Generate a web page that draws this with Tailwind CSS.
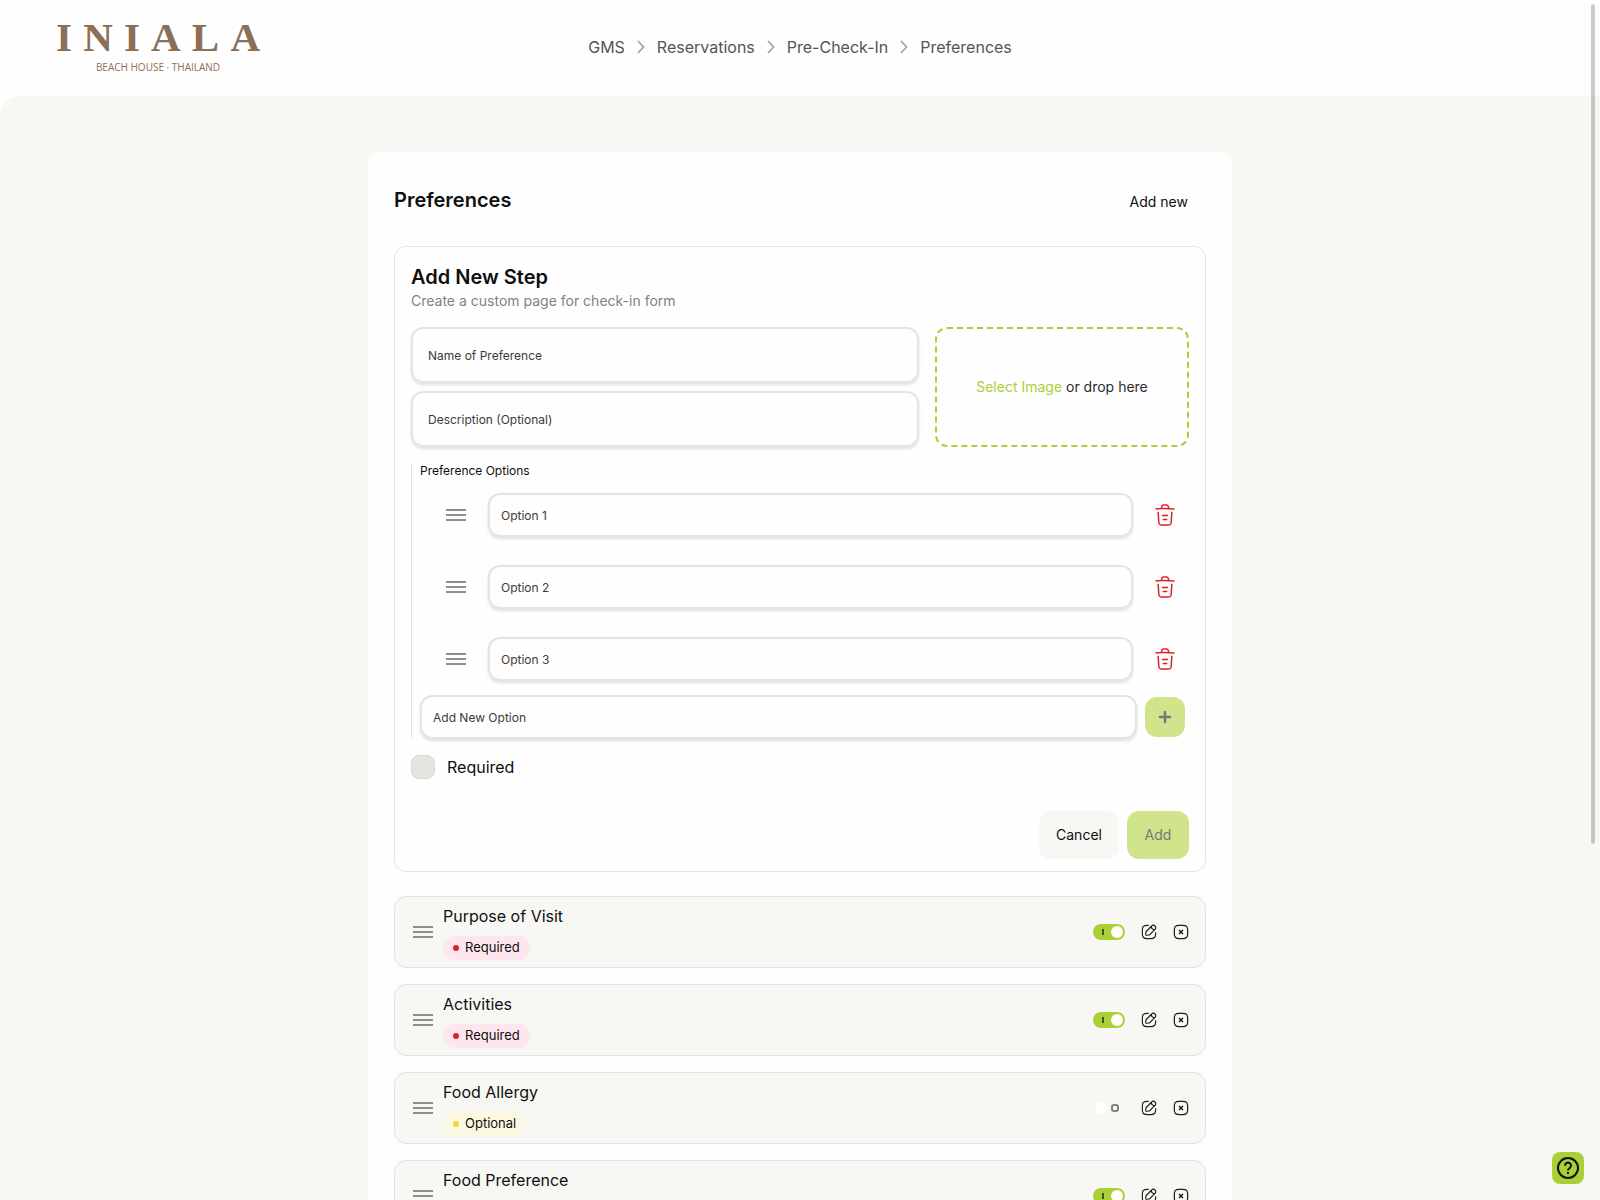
<!DOCTYPE html>
<html lang="en">
  <head>
    <meta charset="UTF-8" />
    <meta name="viewport" content="width=device-width, initial-scale=1.0" />
    <title>Preferences</title>
    <script src="https://cdn.jsdelivr.net/npm/@tailwindcss/browser@4"></script>
  </head>
  <body
    class="flex h-screen flex-col overflow-hidden bg-[#fefefe] font-['Inter',sans-serif] text-base text-[#0f0f0f]"
  >
    <!-- Shared icons -->
    <svg class="hidden">
      <symbol id="grip" viewBox="0 0 24 24">
        <path d="M2 7h20M2 12h20M2 17h20" fill="none" stroke="#8f8f8d" stroke-width="2" />
      </symbol>
      <symbol id="chevron" viewBox="0 0 16 16">
        <path d="M5 2l5.500 6L5 14" fill="none" stroke="#a3a3a3" stroke-width="1.800" />
      </symbol>
      <symbol id="trash" viewBox="0 0 24 24">
        <g fill="none" stroke="#d92429" stroke-width="1.500" stroke-linecap="round" stroke-linejoin="round">
          <path d="M21 5.980C17.670 5.650 14.320 5.480 10.980 5.480C9 5.480 7.020 5.580 5.040 5.780L3 5.980" />
          <path d="M8.500 4.970L8.720 3.660C8.880 2.710 9 2 10.690 2H13.310C15 2 15.130 2.750 15.280 3.670L15.500 4.970" />
          <path d="M18.850 9.140L18.200 19.210C18.090 20.780 18 22 15.210 22H8.790C6 22 5.910 20.780 5.800 19.210L5.150 9.140" />
          <path d="M10.330 16.500H13.660M9.500 12.500H14.500" />
        </g>
      </symbol>
      <symbol id="edit" viewBox="0 0 24 24">
        <g fill="none" stroke="#1c1c1a" stroke-width="1.700" stroke-linecap="round" stroke-linejoin="round">
          <path d="M11 2H9C4 2 2 4 2 9V15C2 20 4 22 9 22H15C20 22 22 20 22 15V13" />
          <path d="M16.040 3.020L8.160 10.900C7.860 11.200 7.560 11.790 7.500 12.220L7.070 15.230C6.910 16.320 7.680 17.080 8.770 16.930L11.780 16.500C12.200 16.440 12.790 16.140 13.100 15.840L20.980 7.960C22.340 6.600 22.980 5.020 20.980 3.020C18.980 1.020 17.400 1.660 16.040 3.020Z" />
          <path d="M14.910 4.150C15.580 6.540 17.450 8.410 19.850 9.090" />
        </g>
      </symbol>
      <symbol id="close" viewBox="0 0 24 24">
        <g fill="none" stroke="#1c1c1a" stroke-linejoin="round">
          <path d="M9 22H15C20 22 22 20 22 15V9C22 4 20 2 15 2H9C4 2 2 4 2 9V15C2 20 4 22 9 22Z" stroke-width="1.800" />
          <path d="M9 9l6 6M15 9l-6 6" stroke-width="2.200" />
        </g>
      </symbol>
    </svg>

    <!-- Header -->
    <header class="grid h-24 shrink-0 grid-cols-[1fr_auto_1fr] items-center px-14 pb-0.5">
      <a href="#" class="flex w-51 flex-col items-center text-[#8b6f56]" aria-label="Iniala Beach House">
        <span class="flex w-full justify-between font-['Liberation_Serif',serif] text-[41px] leading-8 font-bold">
          <span>I</span><span>N</span><span>I</span><span>A</span><span>L</span><span>A</span>
        </span>
        <span class="mt-2 font-['Open_Sans',sans-serif] text-[10px] leading-3">BEACH HOUSE · THAILAND</span>
      </a>
      <nav class="flex items-center gap-2 leading-6 text-[#555553]" aria-label="Breadcrumb">
        <a href="#">GMS</a>
        <svg class="size-4"><use href="#chevron" /></svg>
        <a href="#">Reservations</a>
        <svg class="size-4"><use href="#chevron" /></svg>
        <a href="#">Pre-Check-In</a>
        <svg class="size-4"><use href="#chevron" /></svg>
        <a href="#">Preferences</a>
      </nav>
    </header>

    <!-- Content -->
    <main class="min-h-0 flex-1 overflow-y-auto rounded-tl-[20px] bg-[#f7f8f3] px-4 pt-14 pb-14 [scrollbar-width:none]">
      <div class="mx-auto max-w-[864px] rounded-xl bg-[#fefefe] p-[26px]">
        <div class="mb-5 flex items-center justify-between">
          <h1 class="pb-1 text-xl font-semibold">Preferences</h1>
          <button class="h-12 rounded-xl px-[18px] text-sm">Add new</button>
        </div>

        <!-- New step form -->
        <form class="rounded-xl border border-[#e3e4de] px-4 pt-4 pb-3">
          <h2 class="text-xl font-semibold">Add New Step</h2>
          <p class="text-sm text-[#82827c]">Create a custom page for check-in form</p>

          <div class="mt-4 grid grid-cols-[2fr_1fr] gap-4">
            <div class="flex flex-col gap-2">
              <input
                type="text"
                aria-label="Name of Preference"
                placeholder="Name of Preference"
                class="h-14 w-full rounded-xl border-2 border-[#e4e5df] px-[15px] text-xs shadow-[0_2px_3px_rgba(0,0,0,0.12)] placeholder:text-[#3b3b39]"
              />
              <input
                type="text"
                aria-label="Description"
                placeholder="Description (Optional)"
                class="h-14 w-full rounded-xl border-2 border-[#e4e5df] px-[15px] text-xs shadow-[0_2px_3px_rgba(0,0,0,0.12)] placeholder:text-[#3b3b39]"
              />
            </div>
            <label class="flex items-center justify-center rounded-xl border-2 border-dashed border-[#abd037] text-sm text-[#2b2b29]">
              <input type="file" class="sr-only" />
              <span><span class="text-[#abd037]">Select Image</span> or drop here</span>
            </label>
          </div>

          <div role="group" aria-labelledby="optionsTitle" class="mt-4 border-l border-[#e3e4de] pl-2">
            <p id="optionsTitle" class="text-xs">Preference Options</p>
            <div id="optionList"></div>
            <div class="flex items-center gap-2 pr-1">
              <input
                type="text"
                aria-label="Add New Option"
                placeholder="Add New Option"
                class="h-11 min-w-0 flex-1 rounded-xl border-2 border-[#e4e5df] px-[11px] text-xs shadow-[0_2px_3px_rgba(0,0,0,0.12)] placeholder:text-[#3b3b39]"
              />
              <button type="button" aria-label="Add option" class="flex size-10 items-center justify-center rounded-xl bg-[#d0e48c]">
                <svg class="size-4" viewBox="0 0 16 16">
                  <path d="M8 3v10M3 8h10" stroke="#777876" stroke-width="2.500" stroke-linecap="round" />
                </svg>
              </button>
            </div>
          </div>

          <label class="mt-4 flex items-center gap-3">
            <input type="checkbox" class="size-6 appearance-none rounded-lg border border-[#d8d9d2] bg-[#e4e5df]" />
            Required
          </label>

          <div class="mt-8 flex justify-end gap-2">
            <button type="button" class="h-12 min-w-20 rounded-xl bg-[#f7f8f3] px-4 text-sm">Cancel</button>
            <button type="button" class="h-12 min-w-[62px] rounded-xl bg-[#d0e48c] px-4 text-sm text-[#777876]">Add</button>
          </div>
        </form>

        <!-- Saved preferences -->
        <div id="preferenceList" class="mt-6 flex flex-col gap-4"></div>
      </div>
    </main>

    <!-- Scroll thumb -->
    <div class="fixed top-1 right-[5px] h-[70vh] w-1 rounded-full bg-black/20"></div>

    <!-- Help -->
    <button aria-label="Help" class="fixed right-4 bottom-4 flex size-8 items-center justify-center rounded-lg bg-[#abd037]">
      <svg class="size-6" viewBox="0 0 24 24" fill="none" stroke="#111111" stroke-width="2">
        <circle cx="12" cy="12" r="10" />
        <path d="M9 9.700a3 3 0 1 1 4.700 2.400c-1.100.8-1.700 1.200-1.700 2.400" />
        <path d="M12 16v2" />
      </svg>
    </button>

    <script>
      const options = ["Option 1", "Option 2", "Option 3"];
      const preferences = [
        { name: "Purpose of Visit", required: true, active: true },
        { name: "Activities", required: true, active: true },
        { name: "Food Allergy", required: false, active: false },
        { name: "Food Preference", required: true, active: true },
      ];

      document.getElementById("optionList").innerHTML = options
        .map(
          (option) => `
            <div class="flex items-center gap-5 py-[14px] pr-3 pl-6">
              <svg class="size-6 shrink-0"><use href="#grip" /></svg>
              <input type="text" aria-label="${option}" value="${option}"
                class="h-11 min-w-0 flex-1 rounded-xl border-2 border-[#e4e5df] px-[11px] text-xs text-[#3b3b39] shadow-[0_2px_3px_rgba(0,0,0,0.12)]" />
              <button type="button" aria-label="Delete ${option}">
                <svg class="size-6"><use href="#trash" /></svg>
              </button>
            </div>`
        )
        .join("");

      const requiredBadge = `
        <span class="flex h-6 items-center gap-1.5 rounded-full bg-[#fde6ed] px-2.5 text-[13px]">
          <span class="size-1.5 rounded-full bg-[#d92429]"></span>Required
        </span>`;
      const optionalBadge = `
        <span class="flex h-6 items-center gap-1.5 rounded-full bg-[#fbf8e2] px-2.5 text-[13px]">
          <span class="size-1.5 rounded-full bg-[#f5d63a]"></span>Optional
        </span>`;

      document.getElementById("preferenceList").innerHTML = preferences
        .map(
          (item) => `
            <div class="flex h-[72px] items-center gap-2 rounded-xl border border-[#e3e4de] bg-[#f7f8f3] px-4">
              <svg class="size-6 shrink-0"><use href="#grip" /></svg>
              <div class="flex flex-1 flex-col items-start gap-2">
                <span>${item.name}</span>
                ${item.required ? requiredBadge : optionalBadge}
              </div>
              <div class="flex items-center gap-4">
                <label class="relative block h-4 w-8">
                  <input type="checkbox" role="switch" aria-label="${item.name} enabled" ${item.active ? "checked" : ""}
                    class="peer block h-4 w-8 appearance-none rounded-full checked:bg-[#abd037]" />
                  <span class="absolute top-0.5 left-0.5 size-3 rounded-full bg-white peer-checked:left-[18px]"></span>
                  <span class="absolute top-[5px] left-[9px] hidden h-1.5 w-0.5 bg-[#46551c] peer-checked:block"></span>
                  <span class="absolute top-1 left-[18px] size-2 rounded-[3px] border-2 border-[#82827c] peer-checked:hidden"></span>
                </label>
                <button aria-label="Edit ${item.name}"><svg class="size-4"><use href="#edit" /></svg></button>
                <button aria-label="Remove ${item.name}"><svg class="size-4"><use href="#close" /></svg></button>
              </div>
            </div>`
        )
        .join("");
    </script>
  </body>
</html>
